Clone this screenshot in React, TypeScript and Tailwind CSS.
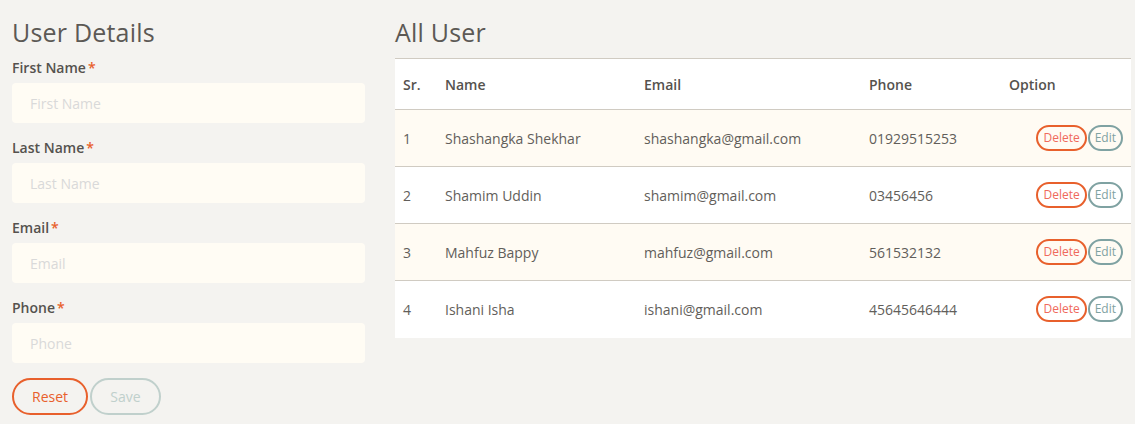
import React from 'react';

const users = [
  { id: 1, name: 'Shashangka Shekhar', email: 'shashangka@gmail.com', phone: '01929515253' },
  { id: 2, name: 'Shamim Uddin', email: 'shamim@gmail.com', phone: '03456456' },
  { id: 3, name: 'Mahfuz Bappy', email: 'mahfuz@gmail.com', phone: '561532132' },
  { id: 4, name: 'Ishani Isha', email: 'ishani@gmail.com', phone: '45645646444' },
];

const fields = ['First Name', 'Last Name', 'Email', 'Phone'];

export default function App() {
  return (
    <div className="min-h-[424px] w-full bg-[#f4f3f0] text-[#625e5a] flex gap-[30px] pl-3 pr-1 pt-[16px]" style={{ fontFamily: '"Open Sans", Lato, sans-serif' }}>
      {/* Form */}
      <div className="w-[353px] shrink-0">
        <h2 className="text-[25px] font-normal leading-[32px] tracking-[0.2px] text-[#5c5955]">User Details</h2>
        <form className="mt-[10px] flex flex-col">
          {fields.map((f) => (
            <div key={f} className="mb-[15px]">
              <label className="block text-[14px] font-semibold leading-[20px] text-[#55524e]">
                {f}<span className="ml-[2px] text-[#e8602c]">*</span>
              </label>
              <input
                placeholder={f}
                className="mt-[5px] h-[40px] w-full rounded-[4px] bg-[#fffcf4] px-[18px] text-[14px] outline-none placeholder:text-[#d9d9d9]"
              />
            </div>
          ))}
          <div className="flex gap-[2px]">
            <button type="button" className="h-[37px] w-[76px] rounded-full border-2 border-[#e8602c] text-[14px] text-[#e8602c]">Reset</button>
            <button type="button" className="h-[37px] w-[71px] rounded-full border-2 border-[#c0d0cc] text-[14px] text-[#c0d0cc]">Save</button>
          </div>
        </form>
      </div>

      {/* Table */}
      <div className="flex-1">
        <h2 className="text-[25px] font-normal leading-[32px] tracking-[0.2px] text-[#5c5955]">All User</h2>
        <table className="mt-[10px] w-full border-collapse bg-white text-left text-[14px]">
          <thead>
            <tr className="h-[51px] border-t border-b border-[#d0cbc2]">
              <th className="w-[42px] pl-2 font-semibold text-[#55524e]">Sr.</th>
              <th className="w-[199px] pl-2 font-semibold text-[#55524e]">Name</th>
              <th className="w-[225px] pl-2 font-semibold text-[#55524e]">Email</th>
              <th className="w-[140px] pl-2 font-semibold text-[#55524e]">Phone</th>
              <th className="pl-2 font-semibold text-[#55524e]">Option</th>
            </tr>
          </thead>
          <tbody>
            {users.map((u, i) => (
              <tr key={u.id} className={`h-[57px] ${i < 3 ? 'border-b border-[#d0cbc2]' : ''} ${i % 2 === 0 ? 'bg-[#fffbf3]' : 'bg-white'}`}>
                <td className="pl-2">{u.id}</td>
                <td className="pl-2">{u.name}</td>
                <td className="pl-2">{u.email}</td>
                <td className="pl-2">{u.phone}</td>
                <td className="pr-2">
                  <div className="flex justify-end gap-[1px]">
                    <button className="h-[26px] rounded-full border-2 border-[#e8602c] px-[5px] text-[12px] text-[#ef6a5c]">Delete</button>
                    <button className="h-[26px] rounded-full border-2 border-[#7fa2a2] px-[5px] text-[12px] text-[#7fa2a2]">Edit</button>
                  </div>
                </td>
              </tr>
            ))}
          </tbody>
        </table>
      </div>
    </div>
  );
}
